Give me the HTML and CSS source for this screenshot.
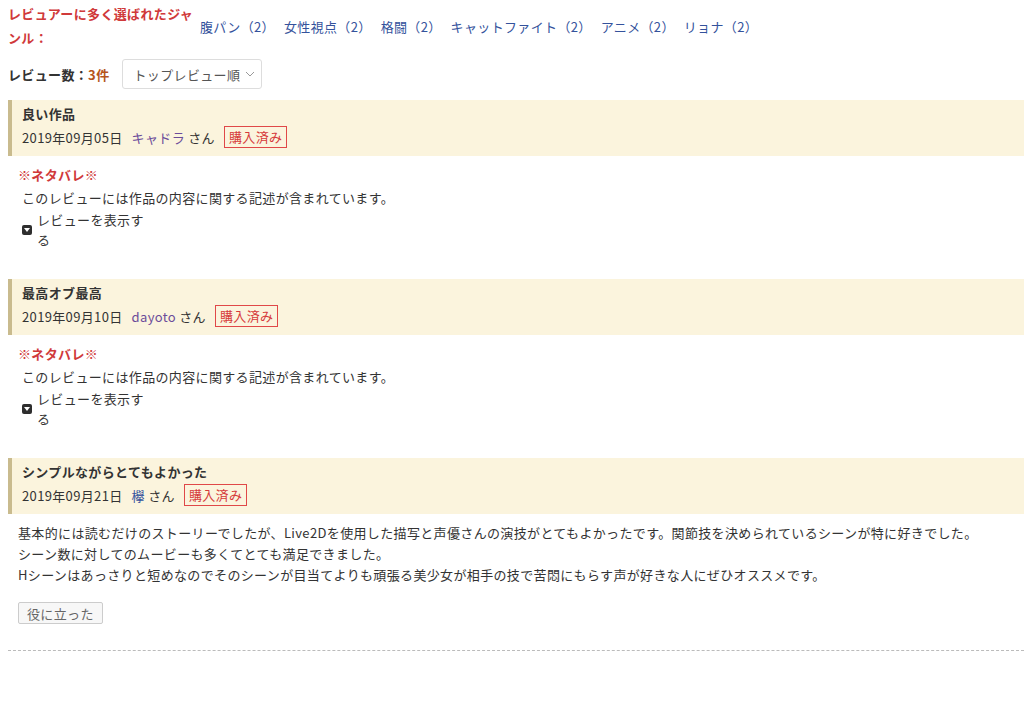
FILE: index.html
```html
<!DOCTYPE html>
<html lang="ja">
<head>
    <meta charset="UTF-8">
    <title>レビュー</title>
    <link rel="stylesheet" href="styles.css">
</head>
<body>
    <div class="genres">
        <p class="genres-label">レビュアーに多く選ばれたジャンル：</p>
        <ul class="genre-list">
            <li><a href="#">腹パン（2）</a></li>
            <li><a href="#">女性視点（2）</a></li>
            <li><a href="#">格闘（2）</a></li>
            <li><a href="#">キャットファイト（2）</a></li>
            <li><a href="#">アニメ（2）</a></li>
            <li><a href="#">リョナ（2）</a></li>
        </ul>
    </div>

    <div class="review-count">
        <span class="count-label">レビュー数：<em>3件</em></span>
        <div class="sort-select">
            トップレビュー順
            <svg width="10" height="6" viewBox="0 0 10 6"><path d="M1 1l4 4 4-4" fill="none" stroke="#999" stroke-width="1"/></svg>
        </div>
    </div>

    <div class="review">
        <div class="review-head">
            <p class="review-title">良い作品</p>
            <div class="review-meta">
                <span>2019年09月05日</span>
                <span><a class="visited" href="#">キャドラ</a> さん</span>
                <span class="badge">購入済み</span>
            </div>
        </div>
        <div class="review-body">
            <p class="spoiler-title">※ネタバレ※</p>
            <div class="spoiler">
                <p>このレビューには作品の内容に関する記述が含まれています。</p>
                <div class="toggle">
                    <span class="toggle-icon"></span>
                    <span class="toggle-text">レビューを表示する</span>
                </div>
            </div>
        </div>
    </div>

    <div class="review">
        <div class="review-head">
            <p class="review-title">最高オブ最高</p>
            <div class="review-meta">
                <span>2019年09月10日</span>
                <span><a class="visited" href="#">dayoto</a> さん</span>
                <span class="badge">購入済み</span>
            </div>
        </div>
        <div class="review-body">
            <p class="spoiler-title">※ネタバレ※</p>
            <div class="spoiler">
                <p>このレビューには作品の内容に関する記述が含まれています。</p>
                <div class="toggle">
                    <span class="toggle-icon"></span>
                    <span class="toggle-text">レビューを表示する</span>
                </div>
            </div>
        </div>
    </div>

    <div class="review">
        <div class="review-head">
            <p class="review-title">シンプルながらとてもよかった</p>
            <div class="review-meta">
                <span>2019年09月21日</span>
                <span><a href="#">欅</a> さん</span>
                <span class="badge">購入済み</span>
            </div>
        </div>
        <div class="review-body">
            <p class="review-text">基本的には読むだけのストーリーでしたが、Live2Dを使用した描写と声優さんの演技がとてもよかったです。関節技を決められているシーンが特に好きでした。<br>シーン数に対してのムービーも多くてとても満足できました。<br>Hシーンはあっさりと短めなのでそのシーンが目当てよりも頑張る美少女が相手の技で苦悶にもらす声が好きな人にぜひオススメです。</p>
            <button class="helpful">役に立った</button>
        </div>
    </div>

    <hr class="divider">
</body>
</html>
```

FILE: styles.css
```css
body {
    margin: 0;
    padding: 0 0 0 8px;
    font-family: "Noto Sans CJK JP", "Noto Sans", sans-serif;
    font-size: 13px;
    letter-spacing: 0.35px;
    color: #333;
    background: #fff;
}
p {
    margin: 0;
}
a {
    color: #34529c;
    text-decoration: none;
}
a.visited {
    color: #6b4c9a;
}

.genres {
    display: flex;
    align-items: center;
    padding-top: 2px;
}
.genres-label {
    width: 188px;
    line-height: 24px;
    color: #d0393a;
    font-weight: bold;
    margin-right: 4px;
}
.genre-list {
    display: flex;
    list-style: none;
    margin: 0;
    padding: 0;
}
.genre-list li {
    margin-right: 9px;
}

.review-count {
    display: flex;
    align-items: center;
    margin-top: 9px;
}
.count-label {
    font-weight: bold;
    margin-right: 13px;
}
.count-label em {
    font-style: normal;
    color: #b5541c;
}
.sort-select {
    display: flex;
    align-items: center;
    gap: 5px;
    height: 28px;
    padding: 0 6px 0 10px;
    border: 1px solid #ddd;
    border-radius: 3px;
    color: #555;
}

.review {
    margin-top: 11px;
}
.review + .review {
    margin-top: 29px;
}
.review-head {
    background: #fbf4dd;
    border-left: 4px solid #c9bb8e;
    padding: 4px 10px 8px;
}
.review-title {
    font-weight: bold;
    line-height: 20px;
}
.review-meta {
    display: flex;
    align-items: center;
    gap: 9px;
    margin-top: 2px;
}
.badge {
    border: 1px solid #e04848;
    color: #d63a3a;
    padding: 0 4px;
    line-height: 20px;
}

.review-body {
    padding-left: 10px;
}
.spoiler-title {
    margin-top: 9px;
    color: #d0393a;
    font-weight: bold;
    line-height: 20px;
}
.spoiler {
    padding-left: 4px;
    line-height: 20px;
}
.spoiler p {
    margin-top: 3px;
}
.toggle {
    display: flex;
    align-items: center;
    margin-top: 2px;
}
.toggle-icon {
    position: relative;
    width: 10px;
    height: 10px;
    background: #2e2e2e;
    border-radius: 2px;
    margin-right: 5px;
}
.toggle-icon::after {
    content: "";
    position: absolute;
    left: 2px;
    top: 3px;
    border-left: 3px solid transparent;
    border-right: 3px solid transparent;
    border-top: 4px solid #fff;
}
.toggle-text {
    width: 110px;
}

.review-text {
    margin-top: 8px;
    line-height: 21px;
}
.helpful {
    margin-top: 17px;
    font-family: inherit;
    font-size: 13px;
    letter-spacing: inherit;
    color: #666;
    background: #f7f7f7;
    border: 1px solid #ccc;
    border-radius: 2px;
    padding: 0 8px;
    height: 22px;
}

.divider {
    margin: 26px 0 0;
    border: 0;
    border-top: 1px dashed #bbb;
}
```
